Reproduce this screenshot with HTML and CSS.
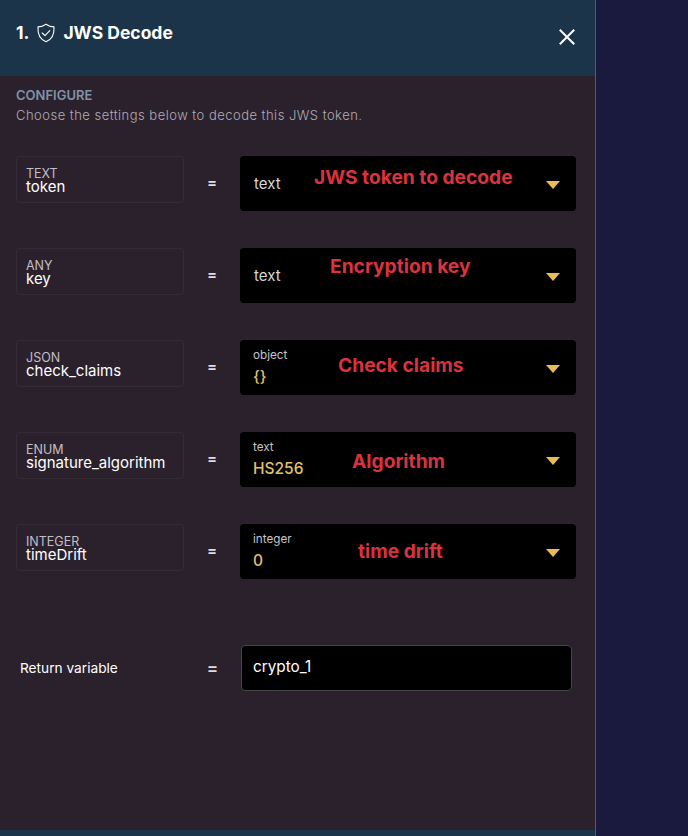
FILE: index.html
```html
<!DOCTYPE html>
<html lang="en">
<head>
<meta charset="utf-8">
<title>JWS Decode</title>
<link rel="stylesheet" href="styles.css">
</head>
<body>
<div class="page">
  <aside class="panel">
    <header class="head">
      <div class="title">
        <span>1.</span>
        <svg class="shield" width="20" height="20" viewBox="0 0 20 20" fill="none" stroke="#fff" stroke-width="1.1" stroke-linecap="round" stroke-linejoin="round"><path d="M10 1.200c2.400 1.700 5 2.600 8 2.700.5 7.300-2 12.500-8 14.900C4 16.400 1.500 11.200 2 3.900c3-.1 5.600-1 8-2.700z"/><path d="M6.200 10l2.800 2.700 4.800-5"/></svg>
        <span>JWS Decode</span>
      </div>
      <svg class="close" width="18" height="18" viewBox="0 0 18 18" fill="none" stroke="#fff" stroke-width="2" stroke-linecap="square"><path d="M2.500 2.500l13 13M15.500 2.500l-13 13"/></svg>
    </header>
    <main class="body">
      <h2 class="eyebrow">CONFIGURE</h2>
      <p class="hint">Choose the settings below to decode this JWS token.</p>
      <div class="rows">
        <div class="row">
          <div class="name"><span class="type">TEXT</span><span class="var">token</span></div>
          <span class="eq">=</span>
          <div class="field">
            <span class="plain">text</span>
            <span class="note note-1">JWS token to decode</span>
            <span class="caret"></span>
          </div>
        </div>
        <div class="row">
          <div class="name"><span class="type">ANY</span><span class="var">key</span></div>
          <span class="eq">=</span>
          <div class="field">
            <span class="plain">text</span>
            <span class="note note-2">Encryption key</span>
            <span class="caret"></span>
          </div>
        </div>
        <div class="row">
          <div class="name"><span class="type">JSON</span><span class="var">check_claims</span></div>
          <span class="eq">=</span>
          <div class="field">
            <div class="stack"><span class="kind">object</span><span class="val">{}</span></div>
            <span class="note note-3">Check claims</span>
            <span class="caret"></span>
          </div>
        </div>
        <div class="row">
          <div class="name"><span class="type">ENUM</span><span class="var">signature_algorithm</span></div>
          <span class="eq">=</span>
          <div class="field">
            <div class="stack"><span class="kind">text</span><span class="val">HS256</span></div>
            <span class="note note-4">Algorithm</span>
            <span class="caret"></span>
          </div>
        </div>
        <div class="row">
          <div class="name"><span class="type">INTEGER</span><span class="var">timeDrift</span></div>
          <span class="eq">=</span>
          <div class="field">
            <div class="stack"><span class="kind">integer</span><span class="val">0</span></div>
            <span class="note note-5">time drift</span>
            <span class="caret"></span>
          </div>
        </div>
      </div>
      <div class="return">
        <span class="return-label">Return variable</span>
        <span class="return-eq">=</span>
        <div class="return-input">crypto_1</div>
      </div>
    </main>
    <footer class="foot"></footer>
  </aside>
  <div class="backdrop"></div>
</div>
</body>
</html>
```
FILE: styles.css
```css
* { box-sizing: border-box; }
html, body { margin: 0; height: 100%; }
body {
  font-family: Inter, "Liberation Sans", sans-serif;
  color: #fff;
  background: #1a1a3e;
  overflow: hidden;
}
.page { display: flex; height: 836px; }
.panel {
  width: 596px;
  flex: none;
  display: flex;
  flex-direction: column;
  background: #2b212d;
  border-right: 1px solid #5b5763;
}
.backdrop { flex: 1; background: #1a1a3e; }
.head {
  height: 76px;
  flex: none;
  background: #1c3449;
  display: flex;
  justify-content: space-between;
  align-items: flex-start;
  padding: 22px 19px 0 16px;
}
.title {
  display: flex;
  align-items: center;
  gap: 7px;
  font-size: 17.500px;
  line-height: 21px;
  font-weight: 700;
}
.shield { display: block; }
.close { margin-top: 6px; }
.body { flex: 1; padding: 11px 19px 0 16px; }
.eyebrow {
  margin: 0;
  font-size: 13px;
  line-height: 16px;
  font-weight: 600;
  color: #7f93a8;
}
.hint {
  margin: 4px 0 0;
  font-size: 13px;
  line-height: 17px;
  font-weight: 300;
  letter-spacing: .48px;
  color: #b1adb4;
}
.rows {
  margin-top: 32px;
  display: flex;
  flex-direction: column;
  gap: 37px;
}
.row {
  display: flex;
  align-items: flex-start;
  height: 55px;
}
.name {
  width: 168px;
  height: 47px;
  border: 1px solid #342b37;
  border-radius: 3px;
  padding: 10px 9px 0;
  display: flex;
  flex-direction: column;
}
.type { font-size: 12.500px; line-height: 13px; color: #c2bfc4; }
.var { font-size: 15px; line-height: 14px; color: #fff; }
.eq {
  width: 56px;
  text-align: center;
  font-size: 15px;
  font-weight: 600;
  line-height: 54px;
  color: #dedde0;
}
.field {
  position: relative;
  width: 336px;
  height: 55px;
  background: #000;
  border-radius: 4px;
  display: flex;
  align-items: center;
  padding: 0 13px;
}
.plain { font-size: 15px; margin-left: 1px; color: #d6d6d6; }
.stack { display: flex; flex-direction: column; margin-top: -1px; }
.kind { font-size: 11.700px; line-height: 14px; color: #c6c6c6; }
.val { margin-top: 6px; font-size: 15.500px; line-height: 18px; font-weight: 500; color: #e2c06a; }
.caret {
  position: absolute;
  right: 16px;
  top: 25px;
  width: 14px;
  height: 8px;
  background: #e8bf4e;
  clip-path: polygon(0 0, 100% 0, 50% 100%);
}
.note {
  position: absolute;
  font-size: 19.200px;
  line-height: 22px;
  font-weight: 700;
  color: #d9333f;
  white-space: nowrap;
}
.note-1 { left: 74px; top: 10px; }
.note-2 { left: 90px; top: 7px; }
.note-3 { left: 98px; top: 14px; }
.note-4 { left: 112px; top: 18px; }
.note-5 { left: 118px; top: 16px; }
.return {
  margin-top: 66px;
  display: flex;
  align-items: center;
  height: 46px;
}
.return-label {
  width: 164px;
  margin-left: 4px;
  font-size: 13.700px;
  font-weight: 400;
  color: #ffffff;
}
.return-eq { width: 57px; text-align: center; font-size: 17px; font-weight: 600; color: #dedde0; }
.return-input {
  width: 331px;
  height: 46px;
  background: #000;
  border: 1px solid #47434b;
  border-radius: 4px;
  padding: 0 11px;
  font-size: 15.300px;
  font-weight: 400;
  line-height: 42px;
  color: #fff;
}
.foot { height: 6px; flex: none; background: #1c3449; }
```
